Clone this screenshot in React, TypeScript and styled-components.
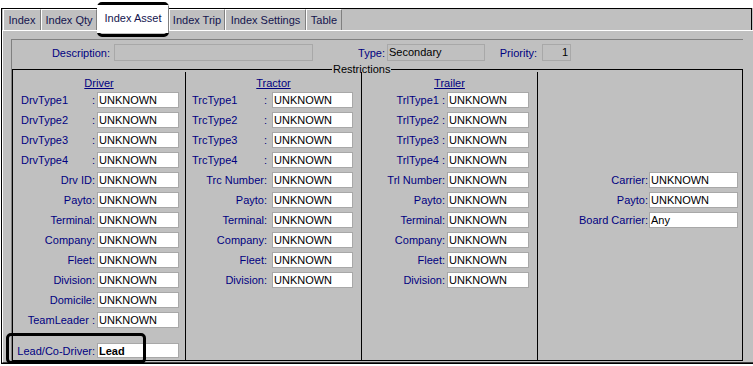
import styled, { createGlobalStyle } from 'styled-components';

const GlobalStyle = createGlobalStyle`
  html, body {
    margin: 0;
    padding: 0;
    background: #ffffff;
  }
  body {
    font-family: "Liberation Sans", Arial, sans-serif;
    font-size: 11px;
  }
  * {
    box-sizing: border-box;
  }
`;

interface FieldDef {
    label: string;
    value: string;
    split?: boolean;
    bold?: boolean;
    gapTop?: number;
    height?: number;
}

interface ColumnDef {
    title?: string;
    top: number;
    labelW: number;
    inputW: number;
    padL: number;
    padR: number;
    fields: FieldDef[];
}

const tabs = [
    { name: 'Index', w: 38 },
    { name: 'Index Qty', w: 56 },
    { name: 'Index Asset', w: 72, active: true },
    { name: 'Index Trip', w: 56 },
    { name: 'Index Settings', w: 81 },
    { name: 'Table', w: 36 },
];

const U = 'UNKNOWN';

const columns: ColumnDef[] = [
    {
        title: 'Driver',
        top: 4,
        labelW: 84,
        inputW: 82,
        padL: 8,
        padR: 2,
        fields: [
            { label: 'DrvType1', value: U, split: true },
            { label: 'DrvType2', value: U, split: true },
            { label: 'DrvType3', value: U, split: true },
            { label: 'DrvType4', value: U, split: true },
            { label: 'Drv ID:', value: U },
            { label: 'Payto:', value: U },
            { label: 'Terminal:', value: U },
            { label: 'Company:', value: U },
            { label: 'Fleet:', value: U },
            { label: 'Division:', value: U },
            { label: 'Domicile:', value: U },
            { label: 'TeamLeader :', value: U },
            { label: 'Lead/Co-Driver:', value: 'Lead', bold: true, gapTop: 11, height: 15 },
        ],
    },
    {
        title: 'Tractor',
        top: 4,
        labelW: 86,
        inputW: 81,
        padL: 6,
        padR: 5,
        fields: [
            { label: 'TrcType1', value: U, split: true },
            { label: 'TrcType2', value: U, split: true },
            { label: 'TrcType3', value: U, split: true },
            { label: 'TrcType4', value: U, split: true },
            { label: 'Trc Number:', value: U },
            { label: 'Payto:', value: U },
            { label: 'Terminal:', value: U },
            { label: 'Company:', value: U },
            { label: 'Fleet:', value: U },
            { label: 'Division:', value: U },
        ],
    },
    {
        title: 'Trailer',
        top: 4,
        labelW: 85,
        inputW: 82,
        padL: 0,
        padR: 2,
        fields: [
            { label: 'TrlType1 :', value: U },
            { label: 'TrlType2 :', value: U },
            { label: 'TrlType3 :', value: U },
            { label: 'TrlType4 :', value: U },
            { label: 'Trl Number:', value: U },
            { label: 'Payto:', value: U },
            { label: 'Terminal:', value: U },
            { label: 'Company:', value: U },
            { label: 'Fleet:', value: U },
            { label: 'Division:', value: U },
        ],
    },
    {
        top: 100,
        labelW: 111,
        inputW: 89,
        padL: 0,
        padR: 1,
        fields: [
            { label: 'Carrier:', value: U },
            { label: 'Payto:', value: U },
            { label: 'Board Carrier:', value: 'Any' },
        ],
    },
];

export default function App() {
    return (
        <Root>
            <GlobalStyle />
            <Window>
                <TabStrip>
                    {tabs.map((t) => (
                        <Tab key={t.name} $w={t.w} $active={!!t.active}>
                            {t.name}
                        </Tab>
                    ))}
                </TabStrip>
                <Page>
                    <Inner>
                        <HeaderRow>
                            <HeaderLabel $w={98}>Description:</HeaderLabel>
                            <ReadOnlyBox $w={199} $ml={4} />
                            <HeaderLabel $w={72}>Type:</HeaderLabel>
                            <ReadOnlyBox $w={98} $ml={2}>Secondary</ReadOnlyBox>
                            <HeaderLabel $w={52}>Priority:</HeaderLabel>
                            <ReadOnlyBox $w={29} $ml={5} $right>
                                1
                            </ReadOnlyBox>
                        </HeaderRow>
                        <GroupBox>
                            <Legend>Restrictions</Legend>
                            <Columns>
                                {columns.map((col, i) => (
                                    <Column key={i} $first={i === 0} $top={col.top}>
                                        {col.title && <ColumnTitle>{col.title}</ColumnTitle>}
                                        {col.fields.map((f) => (
                                            <FieldRow
                                                key={f.label}
                                                $labelW={col.labelW}
                                                $inputW={col.inputW}
                                                $mt={f.gapTop}
                                                $h={f.height}
                                            >
                                                <FieldLabel
                                                    $split={!!f.split}
                                                    $padL={col.padL}
                                                    $padR={col.padR}
                                                >
                                                    {f.split ? (
                                                        <>
                                                            <span>{f.label}</span>
                                                            <span>:</span>
                                                        </>
                                                    ) : (
                                                        f.label
                                                    )}
                                                </FieldLabel>
                                                <TextBox $bold={!!f.bold}>{f.value}</TextBox>
                                            </FieldRow>
                                        ))}
                                    </Column>
                                ))}
                            </Columns>
                        </GroupBox>
                    </Inner>
                </Page>
            </Window>
            <Callout $x={97} $y={2} $w={72} $h={35} />
            <Callout $x={6} $y={333} $w={140} $h={31} />
        </Root>
    );
}

const Root = styled.div`
    position: relative;
    width: 753px;
    height: 366px;
    overflow: hidden;
    background: #ffffff;
`;

const Window = styled.div`
    display: flex;
    flex-direction: column;
    width: 752px;
    height: 356px;
    margin: 8px 0 0 1px;

    border-left: 1px solid #000000;
    border-bottom: 1px solid #000000;
    background: #c0c0c0;
`;

const TabStrip = styled.div`
    display: flex;
    align-items: flex-start;
    width: 750px;
    height: 22px;
    padding-left: 1px;

    border-top: 1px solid #000000;
    border-right: 1px solid #000000;
`;

const Tab = styled.div<{ $w: number; $active: boolean }>`
    position: relative;
    z-index: ${({ $active }) => ($active ? 2 : 1)};
    display: flex;
    align-items: center;
    justify-content: center;
    width: ${({ $w }) => $w}px;
    height: ${({ $active }) => ($active ? 28 : 21)}px;
    margin-top: ${({ $active }) => ($active ? -4 : 0)}px;
    padding-bottom: ${({ $active }) => ($active ? 3 : 0)}px;

    color: #14144e;
    white-space: nowrap;
    border-top: 1px solid #ffffff;
    border-left: 1px solid #ffffff;
    border-right: 1px solid #808080;
    background: ${({ $active }) => ($active ? '#ffffff' : '#c0c0c0')};
`;

const Page = styled.div`
    display: flex;
    flex: 1;
    flex-direction: column;
    padding: 8px 10px 0 8px;

    border-top: 1px solid #ffffff;
    border-left: 1px solid #ffffff;
    border-bottom: 1px solid #404040;
`;

const Inner = styled.div`
    display: flex;
    flex: 1;
    flex-direction: column;

    border-top: 1px solid #808080;
    border-left: 1px solid #808080;
`;

const HeaderRow = styled.div`
    display: flex;
    align-items: center;
    height: 17px;
    margin-top: 4px;
`;

const HeaderLabel = styled.span<{ $w: number }>`
    width: ${({ $w }) => $w}px;

    color: #000080;
    text-align: right;
    white-space: nowrap;
`;

const ReadOnlyBox = styled.div<{ $w: number; $ml: number; $right?: boolean }>`
    width: ${({ $w }) => $w}px;
    height: 17px;
    margin-left: ${({ $ml }) => $ml}px;
    padding: 0 2px 0 1px;

    color: #000000;
    line-height: 15px;
    text-align: ${({ $right }) => ($right ? 'right' : 'left')};
    border: 1px solid #a8a8a8;
    background: #c0c0c0;
`;

const GroupBox = styled.fieldset`
    min-width: 0;
    margin: 5px 0 0 0;
    padding: 0;

    border: 1px solid #000000;
`;

const Legend = styled.legend`
    height: 6px;
    margin-left: 319px;
    padding: 0 1px;

    color: #000000;
    line-height: 6px;
`;

const Columns = styled.div`
    display: grid;
    grid-template-columns: 172px 176px 176px 1fr;
    height: 288px;
`;

const Column = styled.div<{ $first: boolean; $top: number }>`
    display: flex;
    flex-direction: column;
    gap: 4px;
    padding-top: ${({ $top }) => $top}px;

    border-left: ${({ $first }) => ($first ? 'none' : '1px solid #000000')};
`;

const ColumnTitle = styled.div`
    height: 14px;
    margin-bottom: -2px;

    color: #000080;
    line-height: 14px;
    text-align: center;
    text-decoration: underline;
`;

const FieldRow = styled.div<{ $labelW: number; $inputW: number; $mt?: number; $h?: number }>`
    display: grid;
    grid-template-columns: ${({ $labelW }) => $labelW}px ${({ $inputW }) => $inputW}px;
    height: ${({ $h }) => $h ?? 16}px;
    margin-top: ${({ $mt }) => $mt ?? 0}px;
`;

const FieldLabel = styled.span<{ $split: boolean; $padL: number; $padR: number }>`
    display: flex;
    align-items: center;
    justify-content: ${({ $split }) => ($split ? 'space-between' : 'flex-end')};
    padding: 0 ${({ $padR }) => $padR}px 0 ${({ $padL }) => $padL}px;

    color: #000080;
    white-space: nowrap;
`;

const TextBox = styled.div<{ $bold: boolean }>`
    overflow: hidden;
    padding: 0 1px;

    color: #000000;
    font-weight: ${({ $bold }) => ($bold ? 700 : 400)};
    line-height: 14px;
    white-space: nowrap;
    border: 1px solid #a8a8a8;
    background: #ffffff;
`;

const Callout = styled.div<{ $x: number; $y: number; $w: number; $h: number }>`
    position: absolute;
    left: ${({ $x }) => $x}px;
    top: ${({ $y }) => $y}px;
    width: ${({ $w }) => $w}px;
    height: ${({ $h }) => $h}px;

    border: 3px solid #000000;
    border-radius: 5px;
    pointer-events: none;
`;
